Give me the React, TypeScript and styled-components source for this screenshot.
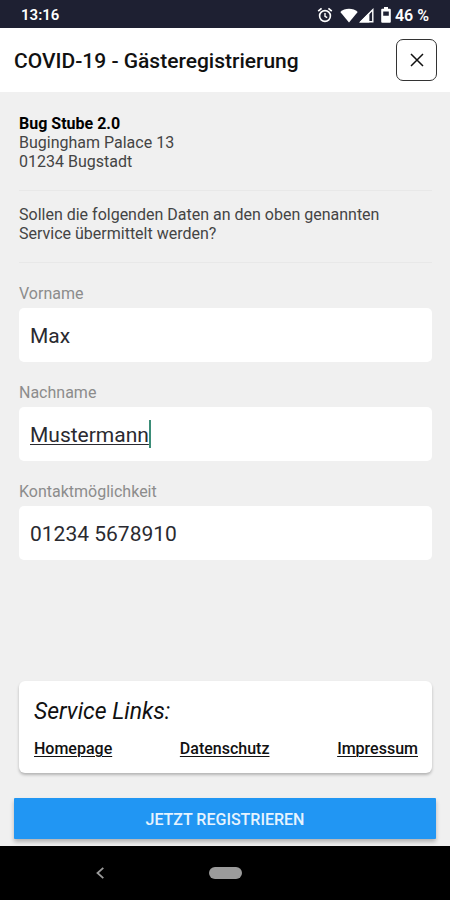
import React, { useState } from "react";
import styled, { createGlobalStyle, css } from "styled-components";

const GlobalStyle = createGlobalStyle`
  *, *::before, *::after { box-sizing: border-box; }
  body {
    margin: 0;
    background: #f0f0f0;
    font-family: Roboto, "Liberation Sans", sans-serif;
    color: #111;
  }
  button, input { font: inherit; color: inherit; }
`;

const Screen = styled.div`
  display: flex;
  flex-direction: column;
  min-height: 100vh;
`;

const StatusBar = styled.div`
  display: flex;
  align-items: center;
  justify-content: space-between;
  height: 28px;
  padding: 2px 21px 0;
  background: #1e2032;
  color: #fff;
  font-size: 15px;
  font-weight: 600;
`;

const StatusIcons = styled.div`
  display: flex;
  align-items: center;
  gap: 7px;
`;

const StatusGroup = styled.div<{ $gap: number }>`
  display: flex;
  align-items: center;
  gap: ${(p) => p.$gap}px;
`;

const BatteryLevel = styled.span`
  font-size: 16px;
`;

const Header = styled.header`
  display: flex;
  align-items: center;
  justify-content: space-between;
  height: 64px;
  padding: 0 13px 0 14px;
  background: #fff;
`;

const Title = styled.h1`
  margin: 0;
  padding-top: 2px;
  font-size: 21px;
  line-height: 24px;
  font-weight: 500;
`;

const CloseButton = styled.button`
  display: grid;
  place-items: center;
  width: 41px;
  height: 42px;
  padding: 0;
  border: 1px solid #333;
  border-radius: 7px;
  background: #fff;
`;

const Content = styled.main`
  flex: 1;
  display: flex;
  flex-direction: column;
  padding: 22px 18px 25px 19px;
`;

const Text = styled.p`
  margin: 0;
  font-size: 16px;
  line-height: 19px;
  color: #444;
`;

const ServiceName = styled.strong`
  font-weight: 700;
  color: #000;
`;

const Divider = styled.hr<{ $before: number; $after: number }>`
  width: 100%;
  height: 1px;
  margin: ${(p) => p.$before}px 0 ${(p) => p.$after}px;
  border: 0;
  background: #e8e8e8;
`;

const Form = styled.form`
  display: flex;
  flex-direction: column;
  gap: 21px;
`;

const Field = styled.label`
  display: flex;
  flex-direction: column;
  gap: 5px;
  font-size: 16px;
  line-height: 19px;
  color: #8c8c8c;
`;

const FieldBox = styled.span`
  display: flex;
  align-items: center;
  height: 54px;
  padding: 2px 11px 0;
  border-radius: 5px;
  background: #fff;
  overflow: hidden;
`;

const FieldInput = styled.input<{ $active: boolean }>`
  min-width: 0;
  padding: 0;
  border: 0;
  outline: 0;
  background: transparent;
  font-size: 21px;
  line-height: 26px;
  font-weight: 400;
  color: #2a2a30;
  ${(p) =>
    p.$active
      ? css`
          field-sizing: content;
          text-decoration: underline;
          text-decoration-thickness: 1px;
          text-underline-offset: 2px;
          caret-color: transparent;
        `
      : css`
          flex: 1;
        `}
`;

const Caret = styled.span`
  width: 2px;
  height: 28px;
  margin-bottom: 2px;
  background: #3b8d78;
`;

const LinksCard = styled.section`
  margin-top: auto;
  padding: 16px 14px 14px 15px;
  border-radius: 6px;
  background: #fff;
  box-shadow: 0 2px 3px rgba(0, 0, 0, 0.25);
`;

const LinksTitle = styled.h2`
  margin: 0 0 12px;
  font-size: 23px;
  line-height: 30px;
  font-weight: 400;
  font-style: italic;
  color: #111;
`;

const LinksRow = styled.nav`
  display: flex;
  justify-content: space-between;
`;

const ServiceLink = styled.a`
  font-size: 16px;
  line-height: 20px;
  font-weight: 500;
  color: #111;
  text-decoration: underline;
  text-decoration-thickness: 1px;
  text-underline-offset: 2px;
`;

const SubmitArea = styled.div`
  display: flex;
  padding: 0 14px 7px;
`;

const SubmitButton = styled.button`
  flex: 1;
  height: 41px;
  padding: 2px 0 0;
  border: 0;
  border-radius: 1px;
  background: #2196f3;
  color: #e6f3fe;
  font-size: 16px;
  line-height: 20px;
  font-weight: 500;
  box-shadow: 0 3px 4px rgba(0, 0, 0, 0.25);
`;

const NavBar = styled.nav`
  display: grid;
  grid-template-columns: repeat(9, 1fr);
  align-items: center;
  justify-items: center;
  height: 54px;
  background: #000;
`;

const NavButton = styled.button<{ $column: string }>`
  grid-column: ${(p) => p.$column};
  display: grid;
  place-items: center;
  padding: 0;
  border: 0;
  background: transparent;
`;

const HomePill = styled.span`
  width: 33px;
  height: 12px;
  border-radius: 6px;
  background: #9b9b9b;
`;

const AlarmIcon = () => (
  <svg width="16" height="16" viewBox="0 0 16 16" fill="none" stroke="#fff" aria-hidden="true">
    <circle cx="8" cy="9" r="5.4" strokeWidth="1.6" />
    <path d="M8 6v3.3l2.2 1.4" strokeWidth="1.4" />
    <path d="M1.2 4.2 4.6 1.4M14.8 4.2 11.4 1.4" strokeWidth="1.7" />
  </svg>
);

const WifiIcon = () => (
  <svg width="18" height="15" viewBox="0 0 18 15" fill="#fff" aria-hidden="true">
    <path d="M9 14.6.3 4C2.6 2 5.5.8 9 .8S15.4 2 17.7 4z" />
  </svg>
);

const SignalIcon = () => (
  <svg width="15" height="15" viewBox="0 0 15 15" aria-hidden="true">
    <path d="M1.8 13.8 13.8 1.8v12z" fill="none" stroke="#fff" strokeWidth="1.4" />
    <path d="M.4 14.5 10.4 4.5v10z" fill="#fff" />
  </svg>
);

const BatteryIcon = () => (
  <svg width="10" height="16" viewBox="0 0 10 16" aria-hidden="true">
    <path
      d="M3 0h4v1.7h1.8q1 0 1 1v12q0 1-1 1H1.2q-1 0-1-1v-12q0-1 1-1H3zM2.200 4.600v4.200h5.600V4.600z"
      fill="#fff"
      fillRule="evenodd"
    />
  </svg>
);

const CloseIcon = () => (
  <svg width="14" height="14" viewBox="0 0 14 14" stroke="#111" strokeWidth="1.5" aria-hidden="true">
    <path d="M1 1l12 12M13 1 1 13" />
  </svg>
);

const BackIcon = () => (
  <svg width="8" height="12" viewBox="0 0 8 12" fill="none" stroke="#9b9b9b" strokeWidth="1.8" aria-hidden="true">
    <path d="M7.3.8 1.5 6l5.8 5.2" />
  </svg>
);

type FieldName = "vorname" | "nachname" | "kontakt";

const fields: { name: FieldName; label: string }[] = [
  { name: "vorname", label: "Vorname" },
  { name: "nachname", label: "Nachname" },
  { name: "kontakt", label: "Kontaktmöglichkeit" },
];

export default function App() {
  const [active, setActive] = useState<FieldName>("nachname");
  const [values, setValues] = useState<Record<FieldName, string>>({
    vorname: "Max",
    nachname: "Mustermann",
    kontakt: "01234 5678910",
  });

  return (
    <>
      <GlobalStyle />
      <Screen>
        <StatusBar>
          <span>13:16</span>
          <StatusIcons>
            <AlarmIcon />
            <StatusGroup $gap={1}>
              <WifiIcon />
              <SignalIcon />
            </StatusGroup>
            <StatusGroup $gap={4}>
              <BatteryIcon />
              <BatteryLevel>46 %</BatteryLevel>
            </StatusGroup>
          </StatusIcons>
        </StatusBar>
        <Header>
          <Title>COVID-19 - Gästeregistrierung</Title>
          <CloseButton type="button" aria-label="Schließen">
            <CloseIcon />
          </CloseButton>
        </Header>
        <Content>
          <Text>
            <ServiceName>Bug Stube 2.0</ServiceName>
            <br />
            Bugingham Palace 13
            <br />
            01234 Bugstadt
          </Text>
          <Divider $before={19} $after={14} />
          <Text>Sollen die folgenden Daten an den oben genannten Service übermittelt werden?</Text>
          <Divider $before={19} $after={21} />
          <Form id="registrierung" onSubmit={(e) => e.preventDefault()}>
            {fields.map(({ name, label }) => (
              <Field key={name}>
                {label}
                <FieldBox>
                  <FieldInput
                    name={name}
                    value={values[name]}
                    spellCheck={false}
                    $active={active === name}
                    onFocus={() => setActive(name)}
                    onChange={(e) => setValues({ ...values, [name]: e.target.value })}
                  />
                  {active === name && <Caret />}
                </FieldBox>
              </Field>
            ))}
          </Form>
          <LinksCard>
            <LinksTitle>Service Links:</LinksTitle>
            <LinksRow>
              <ServiceLink href="#homepage">Homepage</ServiceLink>
              <ServiceLink href="#datenschutz">Datenschutz</ServiceLink>
              <ServiceLink href="#impressum">Impressum</ServiceLink>
            </LinksRow>
          </LinksCard>
        </Content>
        <SubmitArea>
          <SubmitButton type="submit" form="registrierung">
            JETZT REGISTRIEREN
          </SubmitButton>
        </SubmitArea>
        <NavBar>
          <NavButton type="button" aria-label="Zurück" $column="2 / 4">
            <BackIcon />
          </NavButton>
          <NavButton type="button" aria-label="Startseite" $column="4 / 7">
            <HomePill />
          </NavButton>
        </NavBar>
      </Screen>
    </>
  );
}
